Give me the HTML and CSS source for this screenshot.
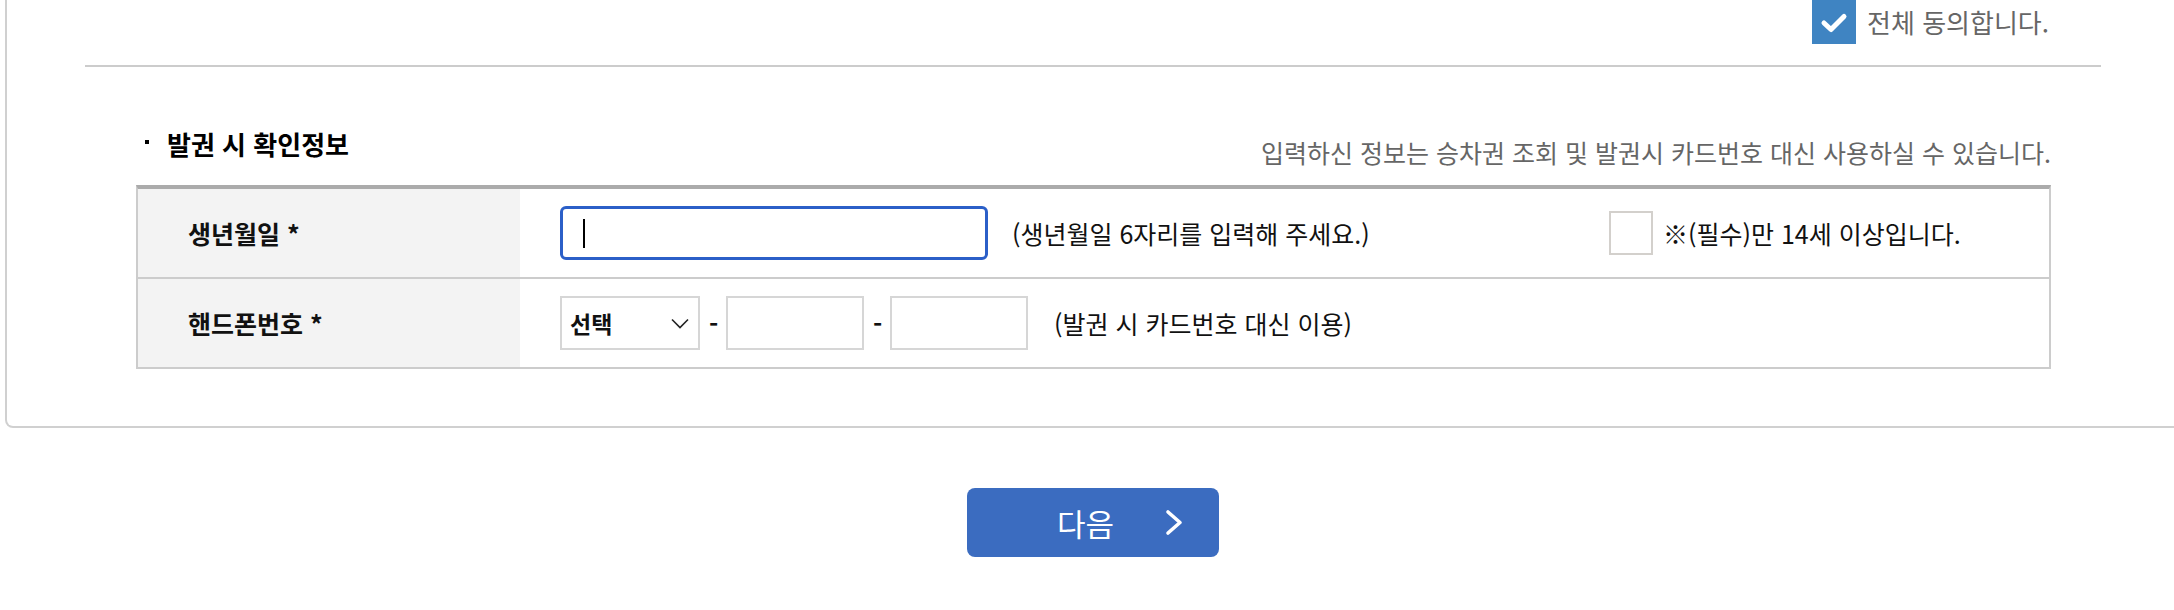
FILE: index.html
```html
<!DOCTYPE html>
<html lang="ko">
<head>
  <meta charset="UTF-8">
  <meta name="viewport" content="width=device-width, initial-scale=1.0">
  <title>발권 시 확인정보</title>
  <link rel="stylesheet" href="styles.css">
</head>
<body>
  <div class="panel">
    <div class="section">
      <div class="agree-all">
        <span class="check checked">
          <svg width="44" height="44" viewBox="0 0 44 44"><path d="M12 23 L19 29.5 L32 16.5" fill="none" stroke="#fff" stroke-width="5" stroke-linecap="round" stroke-linejoin="round"/></svg>
        </span>
        <span class="agree-text">전체 동의합니다.</span>
      </div>

      <div class="info">
        <div class="info-head">
          <h2 class="info-title"><span class="dot"></span>발권 시 확인정보</h2>
          <p class="info-desc">입력하신 정보는 승차권 조회 및 발권시 카드번호 대신 사용하실 수 있습니다.</p>
        </div>

        <div class="info-table">
          <div class="row">
            <div class="row-label">생년월일 *</div>
            <div class="row-body">
              <div class="text-input focused"><span class="caret"></span></div>
              <span class="hint hint-birth">(생년월일 6자리를 입력해 주세요.)</span>
              <label class="age"><span class="check"></span>※(필수)만 14세 이상입니다.</label>
            </div>
          </div>
          <div class="row">
            <div class="row-label">핸드폰번호 *</div>
            <div class="row-body">
              <div class="select">
                <span>선택</span>
                <svg width="18" height="11" viewBox="0 0 18 11"><path d="M1 1.5 L9 9.5 L17 1.5" fill="none" stroke="#222" stroke-width="1.6"/></svg>
              </div>
              <span class="dash">-</span>
              <input type="text" class="small-input">
              <span class="dash">-</span>
              <input type="text" class="small-input">
              <span class="hint hint-phone">(발권 시 카드번호 대신 이용)</span>
            </div>
          </div>
        </div>
      </div>
    </div>
  </div>

  <div class="actions">
    <button class="btn-next">
      <span>다음</span>
      <svg width="18" height="27" viewBox="0 0 18 27"><path d="M3 3 L15 13.5 L3 24" fill="none" stroke="#fff" stroke-width="3.6" stroke-linecap="round" stroke-linejoin="round"/></svg>
    </button>
  </div>
</body>
</html>
```

FILE: styles.css
```css
body {
  margin: 0;
  font-family: "Noto Sans CJK KR", "Noto Sans", sans-serif;
  background-color: #fff;
  color: #111;
  overflow: hidden;
}
.panel {
  margin-left: 5px;
  width: 2200px;
  height: 426px;
  border: 2px solid #d0d0d0;
  border-top: none;
  border-radius: 0 0 8px 8px;
}
.section {
  margin-left: 78px;
  width: 2016px;
}
.agree-all {
  display: flex;
  align-items: center;
  justify-content: flex-end;
  height: 44px;
  padding-right: 52px;
  padding-bottom: 21px;
  border-bottom: 2px solid #ccc;
}
.check {
  display: inline-block;
  width: 44px;
  height: 44px;
  box-sizing: border-box;
  border: 2px solid #d3d0cc;
  background-color: #fff;
  flex: none;
}
.check.checked {
  border: none;
  background-color: #3f84c2;
}
.check svg {
  display: block;
}
.agree-text {
  margin-left: 11px;
  font-size: 26px;
  line-height: 44px;
  color: #666;
}
.info {
  margin: 60px 50px 0 51px;
}
.info-head {
  display: flex;
  justify-content: space-between;
  align-items: flex-start;
  margin-bottom: 16px;
}
.info-title {
  display: flex;
  align-items: center;
  margin: 0;
  padding-left: 9px;
  font-size: 26px;
  line-height: 34px;
  font-weight: bold;
  color: #000;
}
.dot {
  width: 4px;
  height: 4px;
  margin-right: 18px;
  margin-bottom: 5px;
  background-color: #000;
}
.info-desc {
  margin: 8px 0 0;
  font-size: 25px;
  line-height: 34px;
  color: #666;
}
.info-table {
  border: 2px solid #ccc;
  border-top: 4px solid #ababab;
}
.row {
  display: flex;
  height: 88px;
}
.row + .row {
  border-top: 2px solid #ccc;
}
.row-label {
  display: flex;
  align-items: center;
  flex: none;
  width: 382px;
  box-sizing: border-box;
  padding-left: 50px;
  background-color: #f3f3f3;
  font-size: 25px;
  font-weight: bold;
}
.row-body {
  display: flex;
  align-items: center;
  flex: 1;
  padding-left: 40px;
  font-size: 25px;
  color: #111;
}
.text-input {
  display: flex;
  align-items: center;
  width: 428px;
  height: 54px;
  box-sizing: border-box;
  padding-left: 20px;
  border: 3px solid #2b5fc8;
  border-radius: 6px;
}
.caret {
  width: 2px;
  height: 29px;
  background-color: #000;
}
.hint-birth {
  width: 597px;
  margin-left: 24px;
}
.age {
  display: flex;
  align-items: center;
}
.age .check {
  margin-right: 10px;
}
.select {
  display: flex;
  align-items: center;
  justify-content: space-between;
  width: 140px;
  height: 54px;
  box-sizing: border-box;
  padding: 0 9px 0 8px;
  border: 2px solid #d6d6d6;
  font-size: 23px;
  font-weight: bold;
}
.dash {
  width: 8px;
  margin: 0 9px 0 9px;
  text-align: center;
  font-weight: bold;
}
.small-input {
  width: 138px;
  height: 54px;
  box-sizing: border-box;
  margin: 0;
  padding: 0 8px;
  border: 2px solid #d6d6d6;
  border-radius: 0;
  outline: none;
  font-size: 21px;
}
.hint-phone {
  margin-left: 26px;
}
.actions {
  display: flex;
  justify-content: center;
  padding-left: 12px;
  margin-top: 60px;
}
.btn-next {
  display: flex;
  align-items: center;
  width: 252px;
  height: 69px;
  box-sizing: border-box;
  padding: 0 0 0 90px;
  border: none;
  border-radius: 8px;
  background-color: #3b6cc0;
  color: #fff;
  font-family: inherit;
  font-size: 31px;
  cursor: pointer;
}
.btn-next svg {
  margin-left: 51px;
}
```
